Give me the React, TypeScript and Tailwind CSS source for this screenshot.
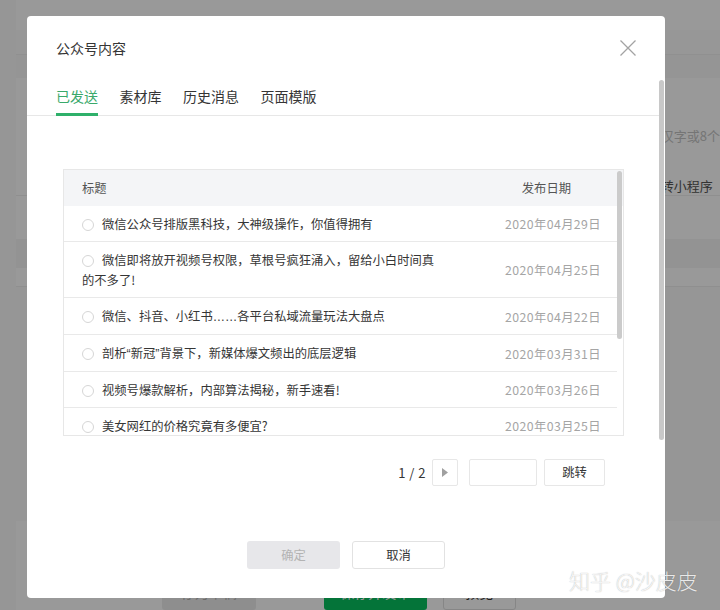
import type { ReactNode } from "react";

const Latin = ({ children }: { children: ReactNode }) => (
  <span className="font-['Liberation_Sans',sans-serif]">{children}</span>
);

const articles: { title: ReactNode; date: string }[] = [
  { title: "微信公众号排版黑科技，大神级操作，你值得拥有", date: "2020年04月29日" },
  { title: "微信即将放开视频号权限，草根号疯狂涌入，留给小白时间真的不多了!", date: "2020年04月25日" },
  {
    title: (
      <>
        微信、抖音、小红书<Latin>……</Latin>各平台私域流量玩法大盘点
      </>
    ),
    date: "2020年04月22日",
  },
  {
    title: (
      <>
        剖析<Latin>“</Latin>新冠<Latin>”</Latin>背景下，新媒体爆文频出的底层逻辑
      </>
    ),
    date: "2020年03月31日",
  },
  { title: "视频号爆款解析，内部算法揭秘，新手速看!", date: "2020年03月26日" },
  { title: "美女网红的价格究竟有多便宜?", date: "2020年03月25日" },
];

const tabs = ["已发送", "素材库", "历史消息", "页面模版"];

const BackgroundPage = () => (
  <div className="flex h-full w-full">
    <div className="w-[20px] bg-[#fbfbfb]" />
    <div className="flex flex-1 flex-col bg-white">
      <div className="h-[31px]" />
      <div className="h-[27px] border-b border-[#f0f0f0] bg-[#fcfcfc]" />
      <div className="h-[24px] bg-[#f8f8f8]" />
      <div className="h-[40px]" />
      <div className="flex h-[83px] flex-col border-b border-[#eeeeee] pl-[645px] text-[13px] leading-[18px] whitespace-nowrap">
        <span className="mt-[10px] text-[#c4c4c4]">汉字或8个</span>
        <span className="mt-[32px] text-[#555555]">转小程序</span>
      </div>
      <div className="h-[45px]" />
      <div className="h-[30px] bg-[#f6f6f6]" />
      <div className="h-[20px] border-b border-[#eeeeee]" />
      <div className="h-[245px] bg-[#fbfbfb]" />
      <div className="flex flex-1 items-start pl-[146px] pt-[53px] text-[14px]">
        <div className="flex h-[36px] w-[94px] items-center justify-center rounded-[3px] bg-[#ededed] text-[#b5b5b5]">存为草稿</div>
        <div className="ml-[68px] flex h-[36px] w-[103px] items-center justify-center rounded-[3px] bg-[#07c160] text-white">保存并发布</div>
        <div className="ml-[16px] flex h-[36px] w-[73px] items-center justify-center rounded-[3px] border border-[#e0e0e0] bg-white text-[#353535]">预览</div>
      </div>
    </div>
  </div>
);

const Radio = () => (
  <span className="mr-[8px] inline-block h-[12px] w-[12px] translate-y-[2px] rounded-full border border-[#d6d6d6] bg-white" />
);

export default function App() {
  return (
    <div className="relative h-[610px] w-[720px] overflow-hidden font-['Noto_Sans_CJK_SC','Noto_Sans',sans-serif]">
      <BackgroundPage />
      <div className="absolute inset-0 bg-black/40" />

      <div className="absolute left-[27px] top-[16px] flex h-[582px] w-[638px] flex-col rounded-[4px] bg-white">
        <div className="pl-[29px] pt-[22px]">
          <h2 className="text-[14px] leading-[20px] text-[#353535]">公众号内容</h2>
        </div>
        {/* close button */}
        <svg className="absolute right-[29px] top-[24px]" width="16" height="16" viewBox="0 0 16 16">
          <path d="M0.5 0.5 L15.5 15.5 M15.5 0.5 L0.5 15.5" stroke="#a3a3a3" strokeWidth="1.3" fill="none" />
        </svg>

        <div className="mr-[6px] mt-[28px] flex gap-[21.5px] border-b border-[#e7e7e7] pl-[29px]">
          {tabs.map((t, i) => (
            <div
              key={t}
              className={
                i === 0
                  ? "-mb-px border-b-[3px] border-[#2eb06a] pb-[7px] text-[14px] leading-[20px] text-[#3aa96b]"
                  : "-mb-px border-b-[3px] border-transparent pb-[7px] text-[14px] leading-[20px] text-[#353535]"
              }
            >
              {t}
            </div>
          ))}
        </div>

        <div className="relative ml-[36px] mt-[53px] h-[267px] w-[561px] overflow-hidden border border-[#e7e7e7] text-[12.3px]">
          <div className="flex h-[36px] items-center bg-[#f4f5f7] text-[#555555]">
            <div className="flex-1 pl-[18px]">标题</div>
            <div className="pr-[52px]">发布日期</div>
          </div>
          <div className="mr-[6px]">
            {articles.map((a) => (
              <div key={a.date} className="flex items-center border-b border-[#e9e9e9] pb-[7px] pt-[8px]">
                <div className="w-[400px] shrink-0 pl-[18px] pr-[18px] leading-[20px] text-[#353535]">
                  <Radio />
                  {a.title}
                </div>
                <div className="flex-1 pr-[16px] text-right leading-[20px] tracking-[0.4px] text-[#a5a5a5]">{a.date}</div>
              </div>
            ))}
          </div>
          <div className="absolute right-[1px] top-[1px] h-[168px] w-[5px] rounded-full bg-[#cbcbcb]" />
        </div>

        <div className="ml-[36px] mt-[23px] flex w-[561px] items-center justify-end pr-[19px] text-[12.3px] text-[#353535]">
          <span className="text-[13px] tracking-[0.5px]">1 / 2</span>
          <div className="ml-[6px] flex h-[27px] w-[26px] items-center justify-center rounded-[2px] border border-[#e7e7e7]">
            <svg width="6" height="9" viewBox="0 0 6 9">
              <path d="M0 0 L6 4.5 L0 9 Z" fill="#a0a0a0" />
            </svg>
          </div>
          <div className="ml-[11px] h-[27px] w-[68px] rounded-[2px] border border-[#e7e7e7]" />
          <div className="ml-[7px] flex h-[27px] w-[61px] items-center justify-center rounded-[2px] border border-[#e7e7e7]">跳转</div>
        </div>

        <div className="mt-[55px] flex justify-center gap-[12px] text-[12.3px]">
          <div className="flex h-[28px] w-[93px] items-center justify-center rounded-[3px] bg-[#e7e7ea] text-[#b3b3b3]">确定</div>
          <div className="flex h-[28px] w-[93px] items-center justify-center rounded-[3px] border border-[#e2e2e2] bg-white text-[#353535]">取消</div>
        </div>

        <div className="absolute right-[1px] top-[64px] h-[360px] w-[5px] rounded-full bg-[#c8c8c8]" />
      </div>

      <div className="absolute left-[569px] top-[566px] whitespace-nowrap text-[21px] font-light leading-[28px] text-white/85 [text-shadow:0_0_1px_rgba(0,0,0,0.35)]">
        知乎 @沙皮皮
      </div>
    </div>
  );
}
